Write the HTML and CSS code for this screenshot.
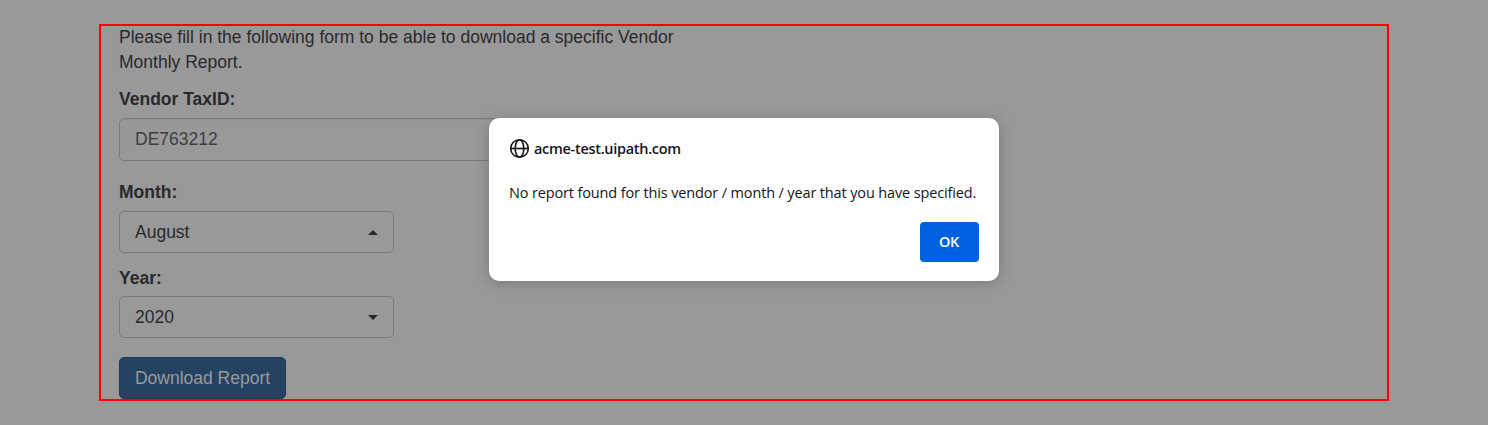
FILE: index.html
```html
<!DOCTYPE html>
<html lang="en">
<head>
<meta charset="utf-8">
<title>Download Monthly Report</title>
<link rel="stylesheet" href="styles.css">
</head>
<body>
<main class="frame">
  <form class="report-form">
    <p class="intro">Please fill in the following form to be able to download a specific Vendor Monthly Report.</p>
    <div class="field field-vendor">
      <div class="label">Vendor TaxID:</div>
      <div class="control control-input">DE763212</div>
    </div>
    <div class="field field-month">
      <div class="label">Month:</div>
      <div class="control control-select"><span>August</span><span class="caret caret-up"></span></div>
    </div>
    <div class="field field-year">
      <div class="label">Year:</div>
      <div class="control control-select"><span>2020</span><span class="caret"></span></div>
    </div>
    <button type="button" class="download">Download Report</button>
  </form>
</main>
<div class="dialog" role="alertdialog">
  <div class="dialog-head">
    <svg class="globe" viewBox="0 0 21 21" fill="none" stroke="#15141a" stroke-width="1.6">
      <circle cx="10.5" cy="10.5" r="8.8"/>
      <ellipse cx="10.5" cy="10.5" rx="4.3" ry="8.8"/>
      <path d="M1.7 10.5h17.6"/>
    </svg>
    <span class="host">acme-test.uipath.com</span>
  </div>
  <p class="message">No report found for this vendor / month / year that you have specified.</p>
  <button type="button" class="ok">OK</button>
</div>
</body>
</html>
```
FILE: styles.css
```css
* { box-sizing: border-box; }

body {
  margin: 0;
  height: 425px;
  padding: 24px 99px;
  overflow: hidden;
  background: #99999a;
  color: #29292c;
  font: 17.5px/25px "Liberation Sans", Arial, sans-serif;
}

.frame {
  width: 1290px;
  height: 377px;
  border: 2px solid #ff0000;
  padding: 0 18px;
}

.report-form {
  display: flex;
  flex-direction: column;
  align-items: flex-start;
  width: 570px;
  margin-top: -1px;
}

.intro { margin: 0; }
.field { width: 100%; }
.field-vendor { margin-top: 12px; }
.field-month { margin-top: 19px; }
.field-year { margin-top: 13px; }

.label {
  height: 25px;
  margin-bottom: 6px;
  font-weight: 700;
}

.field-year .label { margin-bottom: 5px; }

.control {
  display: flex;
  align-items: center;
  height: 42px;
  padding: 0 15px;
  border: 1px solid #7a7a7d;
  border-radius: 5px;
}

.control-input {
  height: 43px;
  color: #3d3d40;
  box-shadow: inset 0 1px 1px rgba(0, 0, 0, 0.06);
}

.control-select {
  justify-content: space-between;
  width: 275px;
}

.caret {
  border-top: 5px solid #29292c;
  border-right: 5px solid transparent;
  border-left: 5px solid transparent;
}

.caret-up {
  border-top: 0;
  border-bottom: 5px solid #29292c;
}

.download {
  width: 167px;
  height: 42px;
  margin-top: 19px;
  padding: 0;
  border: 1px solid #1d3a58;
  border-radius: 5px;
  background: #244363;
  color: #99999a;
  font: inherit;
}

.dialog {
  position: absolute;
  top: 118px;
  left: 489px;
  display: flex;
  flex-direction: column;
  width: 510px;
  height: 163px;
  padding: 20px;
  border-radius: 10px;
  background: #fff;
  box-shadow: 0 2px 14px rgba(0, 0, 0, 0.22);
  color: #15141a;
  font: 14.5px/20px "Open Sans", "Noto Sans", sans-serif;
}

.dialog-head {
  display: flex;
  align-items: center;
  gap: 4px;
  height: 21px;
}

.globe { width: 21px; height: 21px; }

.host {
  font-weight: 600;
  letter-spacing: -0.3px;
}

.message {
  margin: 24px 0 19px;
  letter-spacing: -0.14px;
  white-space: nowrap;
}

.ok {
  align-self: flex-end;
  flex: none;
  width: 59px;
  height: 40px;
  padding: 0 1px 0 0;
  border: 0;
  border-radius: 4px;
  background: #0061e0;
  color: #fff;
  font: 600 14.5px/20px "Open Sans", "Noto Sans", sans-serif;
  letter-spacing: -0.4px;
}
```
